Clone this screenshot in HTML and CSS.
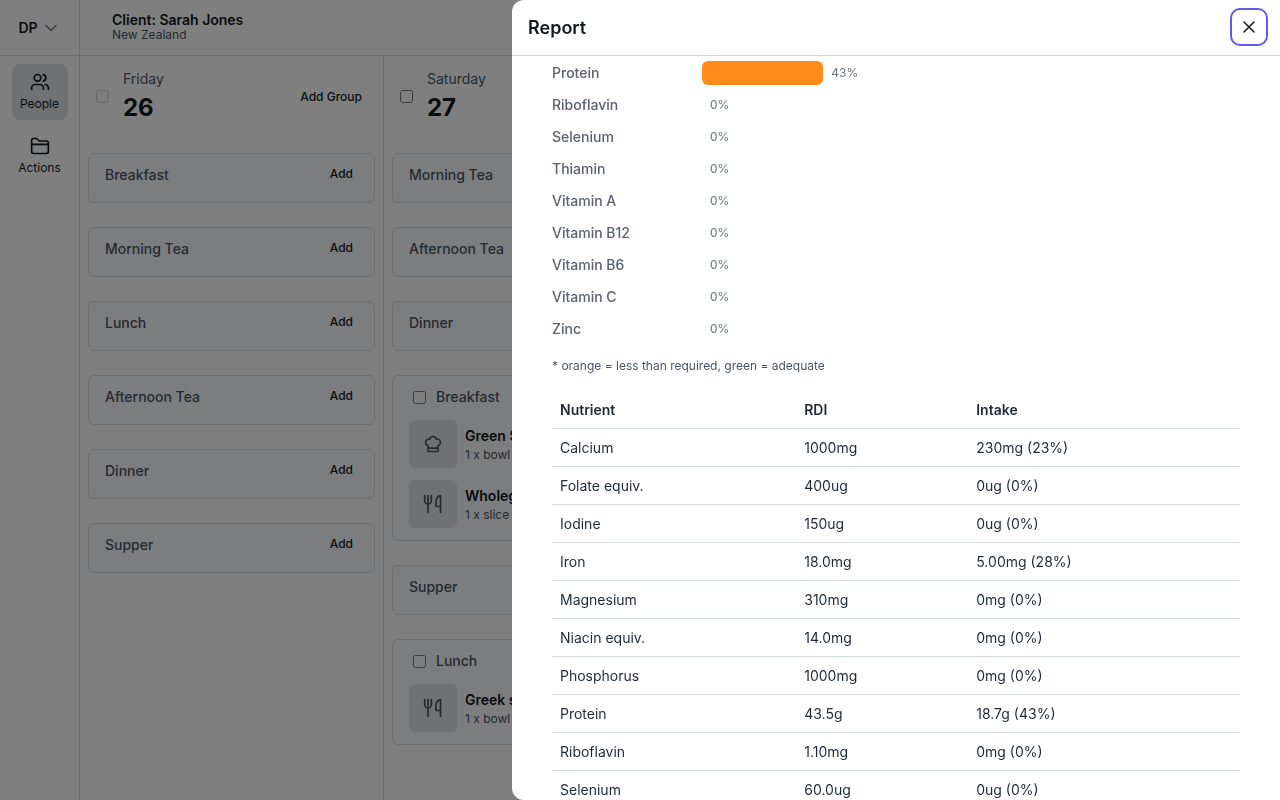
FILE: index.html
```
<!DOCTYPE html>
<html lang="en">
  <head>
    <meta charset="UTF-8" />
    <meta name="viewport" content="width=device-width, initial-scale=1" />
    <title>Report</title>
    <link rel="stylesheet" href="styles.css">
  </head>
  <body>
    <!-- shared icons -->
    <svg class="sprite" aria-hidden="true">
      <symbol id="cutlery" viewBox="0 0 24 24">
        <path d="M2 2v6a4 4 0 0 0 8 0V2M6 2v20" />
        <path d="M21 22V2c-4 .8-5.500 4.500-5.500 8v4a1 1 0 0 0 1 1H21" />
      </symbol>
    </svg>

    <div class="app">
      <header class="topbar">
        <button class="account">
          DP
          <svg class="chevron" viewBox="0 0 12 12"><path d="M1 3.500l5 5 5-5" /></svg>
        </button>
        <div class="client">
          <h1>Client: Sarah Jones</h1>
          <p>New Zealand</p>
        </div>
      </header>

      <div class="main">
        <nav class="sidebar">
          <a href="#people" class="nav-item active">
            <svg class="icon" viewBox="0 0 24 24">
              <circle cx="9" cy="7" r="4" />
              <path d="M2 21v-2a4 4 0 0 1 4-4h6a4 4 0 0 1 4 4v2M16 3.130a4 4 0 0 1 0 7.750M18 15a4 4 0 0 1 4 4v2" />
            </svg>
            People
          </a>
          <a href="#actions" class="nav-item">
            <svg class="icon" viewBox="0 0 24 24">
              <path d="M2 19V5a2 2 0 0 1 2-2h4l3 3h9a2 2 0 0 1 2 2v11a2 2 0 0 1-2 2H4a2 2 0 0 1-2-2zM2 10h20" />
            </svg>
            Actions
          </a>
        </nav>

        <section class="day">
          <div class="day-head">
            <input type="checkbox" aria-label="Friday 26" disabled>
            <div class="date"><span>Friday</span><strong>26</strong></div>
            <button class="add">Add Group</button>
          </div>
          <div class="card"><h2>Breakfast</h2><button class="add">Add</button></div>
          <div class="card"><h2>Morning Tea</h2><button class="add">Add</button></div>
          <div class="card"><h2>Lunch</h2><button class="add">Add</button></div>
          <div class="card"><h2>Afternoon Tea</h2><button class="add">Add</button></div>
          <div class="card"><h2>Dinner</h2><button class="add">Add</button></div>
          <div class="card"><h2>Supper</h2><button class="add">Add</button></div>
        </section>

        <section class="day">
          <div class="day-head">
            <input type="checkbox" aria-label="Saturday 27">
            <div class="date"><span>Saturday</span><strong>27</strong></div>
          </div>
          <div class="card"><h2>Morning Tea</h2></div>
          <div class="card"><h2>Afternoon Tea</h2></div>
          <div class="card"><h2>Dinner</h2></div>
          <div class="card group">
            <label class="group-title"><input type="checkbox">Breakfast</label>
            <div class="food">
              <div class="thumb">
                <svg class="icon" viewBox="0 0 24 24">
                  <path d="M12 3c1.918 0 3.520 1.350 3.910 3.151a4 4 0 0 1 2.090 7.723V21H6v-7.126a4 4 0 1 1 2.092-7.723A4 4 0 0 1 12 3zM6 17h12" />
                </svg>
              </div>
              <div class="food-text"><strong>Green S</strong><span>1 x bowl</span></div>
            </div>
            <div class="food">
              <div class="thumb"><svg class="icon"><use href="#cutlery" /></svg></div>
              <div class="food-text"><strong>Wholeg</strong><span>1 x slice</span></div>
            </div>
          </div>
          <div class="card"><h2>Supper</h2></div>
          <div class="card group">
            <label class="group-title"><input type="checkbox">Lunch</label>
            <div class="food">
              <div class="thumb"><svg class="icon"><use href="#cutlery" /></svg></div>
              <div class="food-text"><strong>Greek s</strong><span>1 x bowl</span></div>
            </div>
          </div>
        </section>
      </div>
    </div>

    <div class="overlay">
      <aside class="drawer" role="dialog" aria-labelledby="drawer-title">
        <header class="drawer-head">
          <h2 id="drawer-title">Report</h2>
          <button class="close" aria-label="Close">
            <svg viewBox="0 0 12 12"><path d="M1 1l10 10M11 1L1 11" /></svg>
          </button>
        </header>
        <div class="drawer-body">
          <div class="chart">
            <div class="row"><span class="name">Protein</span><div class="track"><div class="bar" style="width: 43%"></div><span class="pct">43%</span></div></div>
            <div class="row"><span class="name">Riboflavin</span><div class="track"><span class="pct">0%</span></div></div>
            <div class="row"><span class="name">Selenium</span><div class="track"><span class="pct">0%</span></div></div>
            <div class="row"><span class="name">Thiamin</span><div class="track"><span class="pct">0%</span></div></div>
            <div class="row"><span class="name">Vitamin A</span><div class="track"><span class="pct">0%</span></div></div>
            <div class="row"><span class="name">Vitamin B12</span><div class="track"><span class="pct">0%</span></div></div>
            <div class="row"><span class="name">Vitamin B6</span><div class="track"><span class="pct">0%</span></div></div>
            <div class="row"><span class="name">Vitamin C</span><div class="track"><span class="pct">0%</span></div></div>
            <div class="row"><span class="name">Zinc</span><div class="track"><span class="pct">0%</span></div></div>
          </div>
          <p class="note">* orange = less than required, green = adequate</p>
          <table>
            <thead>
              <tr><th>Nutrient</th><th>RDI</th><th>Intake</th></tr>
            </thead>
            <tbody>
              <tr><td>Calcium</td><td>1000mg</td><td>230mg (23%)</td></tr>
              <tr><td>Folate equiv.</td><td>400ug</td><td>0ug (0%)</td></tr>
              <tr><td>Iodine</td><td>150ug</td><td>0ug (0%)</td></tr>
              <tr><td>Iron</td><td>18.0mg</td><td>5.00mg (28%)</td></tr>
              <tr><td>Magnesium</td><td>310mg</td><td>0mg (0%)</td></tr>
              <tr><td>Niacin equiv.</td><td>14.0mg</td><td>0mg (0%)</td></tr>
              <tr><td>Phosphorus</td><td>1000mg</td><td>0mg (0%)</td></tr>
              <tr><td>Protein</td><td>43.5g</td><td>18.7g (43%)</td></tr>
              <tr><td>Riboflavin</td><td>1.10mg</td><td>0mg (0%)</td></tr>
              <tr><td>Selenium</td><td>60.0ug</td><td>0ug (0%)</td></tr>
            </tbody>
          </table>
        </div>
      </aside>
    </div>
  </body>
</html>
```

FILE: styles.css
```
* {
  box-sizing: border-box;
}

body {
  margin: 0;
  font-family: Inter, sans-serif;
  font-size: 14px;
  color: #11181c;
  overflow: hidden;
}

h1, h2, p {
  margin: 0;
}

button {
  font: inherit;
  color: inherit;
  background: none;
  border: none;
  padding: 0;
}

svg {
  fill: none;
  stroke: currentColor;
  stroke-width: 2;
  stroke-linecap: round;
  stroke-linejoin: round;
}

.sprite {
  display: none;
}

.icon {
  width: 20px;
  height: 20px;
}

.app {
  display: flex;
  flex-direction: column;
  height: 100vh;
}

.topbar {
  display: flex;
  flex: none;
  height: 56px;
  border-bottom: 1px solid #d7dbdf;
}

.account {
  display: flex;
  align-items: center;
  justify-content: center;
  gap: 7px;
  width: 80px;
  padding-right: 4px;
  border-right: 1px solid #d7dbdf;
  font-weight: 600;
}

.chevron {
  width: 12px;
  height: 12px;
  stroke: #6b7280;
  stroke-width: 1.5;
}

.client {
  display: flex;
  flex-direction: column;
  justify-content: center;
  padding: 0 0 2px 32px;
}

.client h1 {
  font-size: 14px;
  line-height: 16px;
  font-weight: 600;
}

.client p {
  font-size: 12px;
  line-height: 14px;
  color: #4b5563;
}

.main {
  display: flex;
  flex: 1;
  min-height: 0;
}

.sidebar {
  display: flex;
  flex-direction: column;
  align-items: center;
  gap: 8px;
  width: 80px;
  padding-top: 8px;
  border-right: 1px solid #d7dbdf;
}

.nav-item {
  display: flex;
  flex-direction: column;
  align-items: center;
  gap: 4px;
  width: 56px;
  padding: 8px 0;
  border-radius: 8px;
  font-size: 12px;
  line-height: 16px;
  color: inherit;
  text-decoration: none;
}

.nav-item.active {
  background: #dfe3e9;
}

.day {
  display: flex;
  flex-direction: column;
  gap: 24px;
  flex: none;
  width: 304px;
  padding: 0 8px;
  border-right: 1px solid #d7dbdf;
}

.day-head {
  display: flex;
  align-items: center;
  height: 73px;
  padding: 8px 8px 0;
}

.day-head .add {
  margin-left: auto;
}

input[type="checkbox"] {
  width: 13px;
  height: 13px;
  margin: 0;
}

.date {
  display: flex;
  flex-direction: column;
  gap: 3px;
  margin-left: 14px;
  line-height: 20px;
  color: #4b5563;
}

.date strong {
  font-size: 24px;
  line-height: 32px;
  color: #11181c;
}

.add {
  padding: 0 5px;
  font-size: 12px;
  line-height: 20px;
  font-weight: 500;
}

.card {
  display: flex;
  align-items: flex-start;
  justify-content: space-between;
  padding: 10px 16px 16px;
  background: #f8fafc;
  border: 1px solid #d7dbdf;
  border-radius: 6px;
}

.card h2,
.group-title {
  font-size: 14px;
  line-height: 22px;
  font-weight: 500;
  color: #4b5563;
}

.group {
  flex-direction: column;
  gap: 12px;
  padding-bottom: 12px;
}

.group-title {
  display: flex;
  align-items: center;
  gap: 10px;
  padding-left: 4px;
}

.food {
  display: flex;
  align-items: center;
  gap: 8px;
}

.thumb {
  display: grid;
  place-items: center;
  width: 48px;
  height: 48px;
  border-radius: 6px;
  background: #dfe3e9;
  color: #4b5563;
}

.food-text {
  display: flex;
  flex-direction: column;
  font-size: 12px;
  line-height: 16px;
  color: #4b5563;
}

.food-text strong {
  font-size: 14px;
  line-height: 22px;
  font-weight: 600;
  color: #11181c;
}

.overlay {
  position: fixed;
  inset: 0;
  display: flex;
  justify-content: flex-end;
  background: rgba(0, 0, 0, 0.5);
}

.drawer {
  display: flex;
  flex-direction: column;
  width: 60%;
  background: #fff;
  border-radius: 12px 0 0 12px;
  overflow: hidden;
}

.drawer-head {
  display: flex;
  flex: none;
  align-items: center;
  justify-content: space-between;
  height: 56px;
  padding: 0 12px 0 16px;
  border-bottom: 1px solid #d4d4d4;
}

.drawer-head h2 {
  font-size: 18px;
  font-weight: 600;
}

.close {
  display: grid;
  place-items: center;
  align-self: flex-start;
  width: 38px;
  height: 38px;
  margin-top: 8px;
  border: 2px solid #5b5bf0;
  border-radius: 10px;
}

.close svg {
  width: 12px;
  height: 12px;
  stroke-width: 1.5;
}

.drawer-body {
  flex: 1;
  min-height: 0;
  padding: 1px 40px 0;
  overflow: hidden;
}

.row {
  display: flex;
  align-items: center;
  height: 32px;
}

.name,
.pct {
  padding-bottom: 2px;
}

.name {
  flex: none;
  width: 150px;
  font-weight: 500;
  color: #5b616e;
}

.track {
  display: flex;
  align-items: center;
  width: 41%;
}

.bar {
  height: 24px;
  border-radius: 6px;
  background: #ff8b1a;
}

.pct {
  margin-left: 8px;
  font-size: 12px;
  color: #6b7280;
}

.note {
  margin: 12px 0 16px;
  font-size: 12px;
  line-height: 18px;
  color: #4b5563;
}

table {
  width: 100%;
  table-layout: fixed;
  border-spacing: 0;
  color: #1f2937;
}

th, td {
  height: 38px;
  padding: 0 8px;
  border-bottom: 1px solid #d5dae1;
  text-align: left;
}

th {
  font-weight: 600;
}

th:nth-child(1) {
  width: 35.5%;
}

th:nth-child(2) {
  width: 25%;
}
```
